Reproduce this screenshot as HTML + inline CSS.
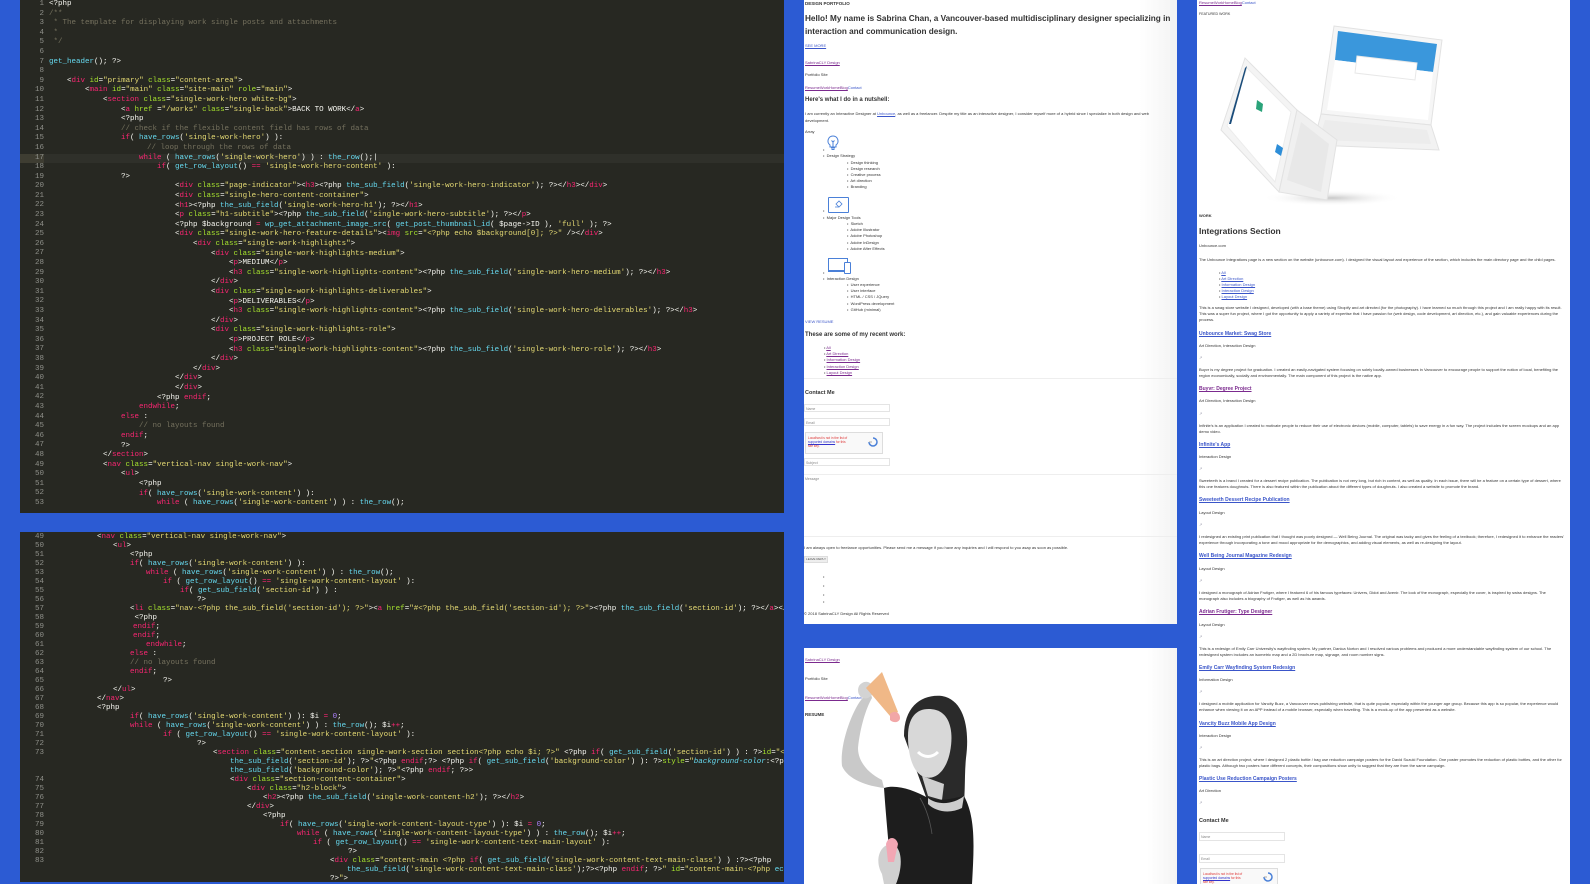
<!DOCTYPE html>
<html><head><meta charset="utf-8"><style>
*{margin:0;padding:0;box-sizing:border-box}
body{width:1590px;height:884px;background:#2c5bd3;position:relative;overflow:hidden;font-family:"Liberation Sans",sans-serif}
.code{position:absolute;background:#272822;overflow:hidden;font-family:"Liberation Mono",monospace;font-size:7.5px;color:#f8f8f2;white-space:pre}
.ln{position:absolute;left:0;width:24px;text-align:right;color:#8f908a}
.l{position:absolute;}
.k{color:#f92672}.a{color:#a6e22e}.s{color:#e6db74}.f{color:#66d9ef}.c{color:#75715e}.n{color:#ae81ff}
.pg{position:absolute;background:#fff;overflow:hidden}
.t{position:absolute;font-size:4px;line-height:6px;color:#333;white-space:nowrap}
.w{white-space:normal}
.lk{color:#3a55c9;text-decoration:underline}
.pu{color:#7b2a8e;text-decoration:underline}
.b{font-weight:bold}
.h{position:absolute;font-weight:bold;color:#333;white-space:nowrap}
.inp{position:absolute;border:1px solid #e4e4e4;background:#fff;font-size:3.5px;color:#888;padding:2px 1px}
.cap{position:absolute;border:1px solid #ddd;background:#f9f9f9;font-size:3.2px;color:#d33;line-height:4px;padding:3px 2px}
.bp .l{margin-top:1px}
</style></head><body>

<!-- TOP CODE PANEL -->
<div class="code" style="left:20px;top:0;width:764px;height:513px">
<div style="position:absolute;left:0;top:153.6px;width:24px;height:9.6px;background:#3e3d32"></div>
<div style="position:absolute;left:24px;top:153.6px;width:740px;height:9.6px;background:#2f302a"></div>
<div class="ln" style="top:0;line-height:9.6px;white-space:pre">1
2
3
4
5
6
7
8
9
10
11
12
13
14
15
16
17
18
19
20
21
22
23
24
25
26
27
28
29
30
31
32
33
34
35
36
37
38
39
40
41
42
43
44
45
46
47
48
49
50
51
52
53</div>
<div class="l" style="left:29px;top:0px">&lt;?php</div>
<div class="l c" style="left:29px;top:9.6px">/**</div>
<div class="l c" style="left:29px;top:19.2px"> * The template for displaying work single posts and attachments</div>
<div class="l c" style="left:29px;top:28.8px"> *</div>
<div class="l c" style="left:29px;top:38.4px"> */</div>
<div class="l" style="left:29px;top:57.6px"><span class="f">get_header</span>(); ?&gt;</div>
<div class="l" style="left:47px;top:76.8px">&lt;<span class="k">div</span> <span class="a">id</span>=<span class="s">"primary"</span> <span class="a">class</span>=<span class="s">"content-area"</span>&gt;</div>
<div class="l" style="left:65px;top:86.4px">&lt;<span class="k">main</span> <span class="a">id</span>=<span class="s">"main"</span> <span class="a">class</span>=<span class="s">"site-main"</span> <span class="a">role</span>=<span class="s">"main"</span>&gt;</div>
<div class="l" style="left:83px;top:96px">&lt;<span class="k">section</span> <span class="a">class</span>=<span class="s">"single-work-hero white-bg"</span>&gt;</div>
<div class="l" style="left:101px;top:105.6px">&lt;<span class="k">a</span> <span class="a">href</span> =<span class="s">"/works"</span> <span class="a">class</span>=<span class="s">"single-back"</span>&gt;BACK TO WORK&lt;/<span class="k">a</span>&gt;</div>
<div class="l" style="left:101px;top:115.2px">&lt;?php</div>
<div class="l c" style="left:101px;top:124.8px">// check if the flexible content field has rows of data</div>
<div class="l" style="left:101px;top:134.4px"><span class="k">if</span>( <span class="f">have_rows</span>(<span class="s">'single-work-hero'</span>) ):</div>
<div class="l c" style="left:127px;top:144px">// loop through the rows of data</div>
<div class="l" style="left:119px;top:153.6px"><span class="k">while</span> ( <span class="f">have_rows</span>(<span class="s">'single-work-hero'</span>) ) : <span class="f">the_row</span>();|</div>
<div class="l" style="left:137px;top:163.2px"><span class="k">if</span>( <span class="f">get_row_layout</span>() <span class="k">==</span> <span class="s">'single-work-hero-content'</span> ):</div>
<div class="l" style="left:101px;top:172.8px">?&gt;</div>
<div class="l" style="left:155px;top:182.4px">&lt;<span class="k">div</span> <span class="a">class</span>=<span class="s">"page-indicator"</span>&gt;&lt;<span class="k">h3</span>&gt;&lt;?php <span class="f">the_sub_field</span>(<span class="s">'single-work-hero-indicator'</span>); ?&gt;&lt;/<span class="k">h3</span>&gt;&lt;/<span class="k">div</span>&gt;</div>
<div class="l" style="left:155px;top:192px">&lt;<span class="k">div</span> <span class="a">class</span>=<span class="s">"single-hero-content-container"</span>&gt;</div>
<div class="l" style="left:155px;top:201.6px">&lt;<span class="k">h1</span>&gt;&lt;?php <span class="f">the_sub_field</span>(<span class="s">'single-work-hero-h1'</span>); ?&gt;&lt;/<span class="k">h1</span>&gt;</div>
<div class="l" style="left:155px;top:211.2px">&lt;<span class="k">p</span> <span class="a">class</span>=<span class="s">"h1-subtitle"</span>&gt;&lt;?php <span class="f">the_sub_field</span>(<span class="s">'single-work-hero-subtitle'</span>); ?&gt;&lt;/<span class="k">p</span>&gt;</div>
<div class="l" style="left:155px;top:220.8px">&lt;?php $background <span class="k">=</span> <span class="f">wp_get_attachment_image_src</span>( <span class="f">get_post_thumbnail_id</span>( $page-&gt;ID ), <span class="s">'full'</span> ); ?&gt;</div>
<div class="l" style="left:155px;top:230.4px">&lt;<span class="k">div</span> <span class="a">class</span>=<span class="s">"single-work-hero-feature-details"</span>&gt;&lt;<span class="k">img</span> <span class="a">src</span>=<span class="s">"&lt;?php echo $background[0]; ?&gt;"</span> /&gt;&lt;/<span class="k">div</span>&gt;</div>
<div class="l" style="left:173px;top:240px">&lt;<span class="k">div</span> <span class="a">class</span>=<span class="s">"single-work-highlights"</span>&gt;</div>
<div class="l" style="left:191px;top:249.6px">&lt;<span class="k">div</span> <span class="a">class</span>=<span class="s">"single-work-highlights-medium"</span>&gt;</div>
<div class="l" style="left:209px;top:259.2px">&lt;<span class="k">p</span>&gt;MEDIUM&lt;/<span class="k">p</span>&gt;</div>
<div class="l" style="left:209px;top:268.8px">&lt;<span class="k">h3</span> <span class="a">class</span>=<span class="s">"single-work-highlights-content"</span>&gt;&lt;?php <span class="f">the_sub_field</span>(<span class="s">'single-work-hero-medium'</span>); ?&gt;&lt;/<span class="k">h3</span>&gt;</div>
<div class="l" style="left:191px;top:278.4px">&lt;/<span class="k">div</span>&gt;</div>
<div class="l" style="left:191px;top:288px">&lt;<span class="k">div</span> <span class="a">class</span>=<span class="s">"single-work-highlights-deliverables"</span>&gt;</div>
<div class="l" style="left:209px;top:297.6px">&lt;<span class="k">p</span>&gt;DELIVERABLES&lt;/<span class="k">p</span>&gt;</div>
<div class="l" style="left:209px;top:307.2px">&lt;<span class="k">h3</span> <span class="a">class</span>=<span class="s">"single-work-highlights-content"</span>&gt;&lt;?php <span class="f">the_sub_field</span>(<span class="s">'single-work-hero-deliverables'</span>); ?&gt;&lt;/<span class="k">h3</span>&gt;</div>
<div class="l" style="left:191px;top:316.8px">&lt;/<span class="k">div</span>&gt;</div>
<div class="l" style="left:191px;top:326.4px">&lt;<span class="k">div</span> <span class="a">class</span>=<span class="s">"single-work-highlights-role"</span>&gt;</div>
<div class="l" style="left:209px;top:336px">&lt;<span class="k">p</span>&gt;PROJECT ROLE&lt;/<span class="k">p</span>&gt;</div>
<div class="l" style="left:209px;top:345.6px">&lt;<span class="k">h3</span> <span class="a">class</span>=<span class="s">"single-work-highlights-content"</span>&gt;&lt;?php <span class="f">the_sub_field</span>(<span class="s">'single-work-hero-role'</span>); ?&gt;&lt;/<span class="k">h3</span>&gt;</div>
<div class="l" style="left:191px;top:355.2px">&lt;/<span class="k">div</span>&gt;</div>
<div class="l" style="left:173px;top:364.8px">&lt;/<span class="k">div</span>&gt;</div>
<div class="l" style="left:155px;top:374.4px">&lt;/<span class="k">div</span>&gt;</div>
<div class="l" style="left:155px;top:384px">&lt;/<span class="k">div</span>&gt;</div>
<div class="l" style="left:137px;top:393.6px">&lt;?php <span class="k">endif</span>;</div>
<div class="l" style="left:119px;top:403.2px"><span class="k">endwhile</span>;</div>
<div class="l" style="left:101px;top:412.8px"><span class="k">else</span> :</div>
<div class="l c" style="left:119px;top:422.4px">// no layouts found</div>
<div class="l" style="left:101px;top:432px"><span class="k">endif</span>;</div>
<div class="l" style="left:101px;top:441.6px">?&gt;</div>
<div class="l" style="left:83px;top:451.2px">&lt;/<span class="k">section</span>&gt;</div>
<div class="l" style="left:83px;top:460.8px">&lt;<span class="k">nav</span> <span class="a">class</span>=<span class="s">"vertical-nav single-work-nav"</span>&gt;</div>
<div class="l" style="left:101px;top:470.4px">&lt;<span class="k">ul</span>&gt;</div>
<div class="l" style="left:119px;top:480px">&lt;?php</div>
<div class="l" style="left:119px;top:489.6px"><span class="k">if</span>( <span class="f">have_rows</span>(<span class="s">'single-work-content'</span>) ):</div>
<div class="l" style="left:137px;top:499.2px"><span class="k">while</span> ( <span class="f">have_rows</span>(<span class="s">'single-work-content'</span>) ) : <span class="f">the_row</span>();</div>
</div>

<!-- BOTTOM CODE PANEL -->
<div class="code bp" style="left:20px;top:532px;width:764px;height:350px">
<div class="ln" style="top:1px;line-height:9px">49
50
51
52
53
54
55
56
57
58
59
60
61
62
63
64
65
66
67
68
69
70
71
72
73


74
75
76
77
78
79
80
81
82
83</div>
<div class="l" style="left:77px;top:0">&lt;<span class="k">nav</span> <span class="a">class</span>=<span class="s">"vertical-nav single-work-nav"</span>&gt;</div>
<div class="l" style="left:93px;top:9px">&lt;<span class="k">ul</span>&gt;</div>
<div class="l" style="left:110px;top:18px">&lt;?php</div>
<div class="l" style="left:110px;top:27px"><span class="k">if</span>( <span class="f">have_rows</span>(<span class="s">'single-work-content'</span>) ):</div>
<div class="l" style="left:126px;top:36px"><span class="k">while</span> ( <span class="f">have_rows</span>(<span class="s">'single-work-content'</span>) ) : <span class="f">the_row</span>();</div>
<div class="l" style="left:143px;top:45px"><span class="k">if</span> ( <span class="f">get_row_layout</span>() <span class="k">==</span> <span class="s">'single-work-content-layout'</span> ):</div>
<div class="l" style="left:160px;top:54px"><span class="k">if</span>( <span class="f">get_sub_field</span>(<span class="s">'section-id'</span>) ) :</div>
<div class="l" style="left:177px;top:63px">?&gt;</div>
<div class="l" style="left:110px;top:72px">&lt;<span class="k">li</span> <span class="a">class</span>=<span class="s">"nav-&lt;?php the_sub_field('section-id'); ?&gt;"</span>&gt;&lt;<span class="k">a</span> <span class="a">href</span>=<span class="s">"#&lt;?php the_sub_field('section-id'); ?&gt;"</span>&gt;&lt;?php <span class="f">the_sub_field</span>(<span class="s">'section-id'</span>); ?&gt;&lt;/<span class="k">a</span>&gt;&lt;/<span class="k">li</span>&gt;</div>
<div class="l" style="left:110px;top:81px"> &lt;?php</div>
<div class="l" style="left:113px;top:90px"><span class="k">endif</span>;</div>
<div class="l" style="left:113px;top:99px"><span class="k">endif</span>;</div>
<div class="l" style="left:126px;top:108px"><span class="k">endwhile</span>;</div>
<div class="l" style="left:110px;top:117px"><span class="k">else</span> :</div>
<div class="l c" style="left:110px;top:126px">// no layouts found</div>
<div class="l" style="left:110px;top:135px"><span class="k">endif</span>;</div>
<div class="l" style="left:143px;top:144px">?&gt;</div>
<div class="l" style="left:93px;top:153px">&lt;/<span class="k">ul</span>&gt;</div>
<div class="l" style="left:77px;top:162px">&lt;/<span class="k">nav</span>&gt;</div>
<div class="l" style="left:77px;top:171px">&lt;?php</div>
<div class="l" style="left:110px;top:180px"><span class="k">if</span>( <span class="f">have_rows</span>(<span class="s">'single-work-content'</span>) ): $i <span class="k">=</span> <span class="n">0</span>;</div>
<div class="l" style="left:110px;top:189px"><span class="k">while</span> ( <span class="f">have_rows</span>(<span class="s">'single-work-content'</span>) ) : <span class="f">the_row</span>(); $i<span class="k">++</span>;</div>
<div class="l" style="left:143px;top:198px"><span class="k">if</span> ( <span class="f">get_row_layout</span>() <span class="k">==</span> <span class="s">'single-work-content-layout'</span> ):</div>
<div class="l" style="left:177px;top:207px">?&gt;</div>
<div class="l" style="left:193px;top:216px">&lt;<span class="k">section</span> <span class="a">class</span>=<span class="s">"content-section single-work-section section&lt;?php echo $i; ?&gt;"</span> &lt;?php <span class="k">if</span>( <span class="f">get_sub_field</span>(<span class="s">'section-id'</span>) ) : ?&gt;<span class="a">id</span>=<span class="s">"&lt;?php</span></div>
<div class="l" style="left:210px;top:225px"><span class="f">the_sub_field</span>(<span class="s">'section-id'</span>); ?&gt;<span class="s">"</span>&lt;?php <span class="k">endif</span>;?&gt; &lt;?php <span class="k">if</span>( <span class="f">get_sub_field</span>(<span class="s">'background-color'</span>) ): ?&gt;<span class="a">style</span>=<span class="s">"</span><span class="f" style="font-style:italic">background-color</span>:&lt;?php</div>
<div class="l" style="left:210px;top:234px"><span class="f">the_sub_field</span>(<span class="s">'background-color'</span>); ?&gt;<span class="s">"</span>&lt;?php <span class="k">endif</span>; ?&gt;&gt;</div>
<div class="l" style="left:210px;top:243px">&lt;<span class="k">div</span> <span class="a">class</span>=<span class="s">"section-content-container"</span>&gt;</div>
<div class="l" style="left:227px;top:252px">&lt;<span class="k">div</span> <span class="a">class</span>=<span class="s">"h2-block"</span>&gt;</div>
<div class="l" style="left:243px;top:261px">&lt;<span class="k">h2</span>&gt;&lt;?php <span class="f">the_sub_field</span>(<span class="s">'single-work-content-h2'</span>); ?&gt;&lt;/<span class="k">h2</span>&gt;</div>
<div class="l" style="left:227px;top:270px">&lt;/<span class="k">div</span>&gt;</div>
<div class="l" style="left:243px;top:279px">&lt;?php</div>
<div class="l" style="left:260px;top:288px"><span class="k">if</span>( <span class="f">have_rows</span>(<span class="s">'single-work-content-layout-type'</span>) ): $i <span class="k">=</span> <span class="n">0</span>;</div>
<div class="l" style="left:277px;top:297px"><span class="k">while</span> ( <span class="f">have_rows</span>(<span class="s">'single-work-content-layout-type'</span>) ) : <span class="f">the_row</span>(); $i<span class="k">++</span>;</div>
<div class="l" style="left:293px;top:306px"><span class="k">if</span> ( <span class="f">get_row_layout</span>() <span class="k">==</span> <span class="s">'single-work-content-text-main-layout'</span> ):</div>
<div class="l" style="left:328px;top:315px">?&gt;</div>
<div class="l" style="left:310px;top:324px">&lt;<span class="k">div</span> <span class="a">class</span>=<span class="s">"content-main &lt;?php</span> <span class="k">if</span>( <span class="f">get_sub_field</span>(<span class="s">'single-work-content-text-main-class'</span>) ) :?&gt;&lt;?php</div>
<div class="l" style="left:327px;top:333px"><span class="f">the_sub_field</span>(<span class="s">'single-work-content-text-main-class'</span>);?&gt;&lt;?php <span class="k">endif</span>; ?&gt;<span class="s">"</span> <span class="a">id</span>=<span class="s">"content-main-&lt;?php</span> <span class="f">echo</span> $i;</div>
<div class="l" style="left:310px;top:342px">?&gt;<span class="s">"</span>&gt;</div>
</div>

<!-- MIDDLE TOP PAGE -->
<div class="pg" style="left:804px;top:0;width:373px;height:624px;background:linear-gradient(90deg,#fff 90%,#f3f3f3)">
<div class="t b" style="left:1px;top:1px;font-size:4.5px">DESIGN PORTFOLIO</div>
<div class="h" style="left:1px;top:12px;font-size:8.2px;line-height:13px">Hello! My name is Sabrina Chan, a Vancouver-based multidisciplinary designer specializing in<br>interaction and communication design.</div>
<div class="t lk" style="left:1px;top:43px">SEE MORE</div>
<div class="t pu" style="left:1px;top:60px">SabrinaCLY Design</div>
<div class="t" style="left:1px;top:72px">Portfolio Site</div>
<div class="t" style="left:1px;top:85px"><span class="pu">ResumeWorkHomeBlog</span><span class="lk" style="text-decoration:none">Contact</span></div>
<div class="h" style="left:1px;top:97px;font-size:6px">Here's what I do in a nutshell:</div>
<div class="t w" style="left:1px;top:110px;width:360px;line-height:7px">I am currently an Interactive Designer at <span class="lk">Unbounce</span>, as well as a freelancer. Despite my title as an interactive designer, I consider myself more of a hybrid since I specialize in both design and web development.</div>
<div class="t" style="left:1px;top:129px">Array</div>
<svg style="position:absolute;left:22px;top:135px" width="14" height="16" viewBox="0 0 14 16"><path d="M7 1a5 5 0 0 0-3 9v2h6v-2a5 5 0 0 0-3-9zM5 13h4M5.5 14.5h3M7 12V7l-1.5-1.5M7 7l1.5-1.5" fill="none" stroke="#4a80d8" stroke-width="1"/></svg>
<div class="t" style="left:19px;top:147px">•</div>
<div class="t" style="left:19px;top:153px">•&nbsp; Design Strategy</div>
<div class="t" style="left:43px;top:160px;line-height:6.1px">•&nbsp; Design thinking<br>•&nbsp; Design research<br>•&nbsp; Creative process<br>•&nbsp; Art direction<br>•&nbsp; Branding</div>
<div style="position:absolute;left:24px;top:197px;width:21px;height:16px;border:1px solid #4a80d8;border-radius:1px"><svg width="19" height="14" viewBox="0 0 19 14"><path d="M7 6l3-3 3 3-3 3zM6 9l4 0" fill="none" stroke="#4a80d8" stroke-width=".8"/></svg></div>
<div class="t" style="left:19px;top:208px">•</div>
<div class="t" style="left:19px;top:215px">•&nbsp; Major Design Tools</div>
<div class="t" style="left:43px;top:221px;line-height:6.2px">•&nbsp; Sketch<br>•&nbsp; Adobe Illustrator<br>•&nbsp; Adobe Photoshop<br>•&nbsp; Adobe InDesign<br>•&nbsp; Adobe After Effects</div>
<div style="position:absolute;left:24px;top:258px;width:20px;height:14px;border:1px solid #4a80d8;border-bottom-width:2px"></div>
<div style="position:absolute;left:40px;top:262px;width:7px;height:12px;border:1px solid #4a80d8;background:#fff;border-radius:1px"></div>
<div class="t" style="left:19px;top:270px">•</div>
<div class="t" style="left:19px;top:276px">•&nbsp; Interaction Design</div>
<div class="t" style="left:43px;top:282px;line-height:6.2px">•&nbsp; User experience<br>•&nbsp; User interface<br>•&nbsp; HTML / CSS / JQuery<br>•&nbsp; WordPress development<br>•&nbsp; GitHub (minimal)</div>
<div class="t lk" style="left:1px;top:319px;text-decoration:none">VIEW RESUME</div>
<div class="h" style="left:1px;top:332px;font-size:6px">These are some of my recent work:</div>
<div class="t" style="left:20px;top:345px;line-height:6.2px">• <span class="pu">All</span><br>• <span class="pu">Art Direction</span><br>• <span class="pu">Information Design</span><br>• <span class="pu">Interaction Design</span><br>• <span class="pu">Layout Design</span></div>
<div style="position:absolute;left:0;top:378px;width:373px;height:1px;background:#eee"></div>
<div class="h" style="left:1px;top:390px;font-size:5.5px">Contact Me</div>
<div class="inp" style="left:0;top:404px;width:86px;height:8px">Name</div>
<div class="inp" style="left:0;top:418px;width:86px;height:8px">Email</div>
<div class="cap" style="left:1px;top:432px;width:78px;height:22px">Localhost is not in the list of<br><span style="color:#33c;text-decoration:underline">supported domains</span> for this<br>site key.<svg style="position:absolute;right:4px;top:4px" width="10" height="10" viewBox="0 0 10 10"><path d="M5 1a4 4 0 1 1-4 4" fill="none" stroke="#4a80d8" stroke-width="1.5"/><path d="M1 5h3" stroke="#aaa"/></svg></div>
<div class="inp" style="left:0;top:458px;width:86px;height:8px">Subject</div>
<div style="position:absolute;left:0;top:474px;width:373px;height:63px;border-top:1px solid #eee;border-bottom:1px solid #eee;font-size:3.5px;color:#888;padding:2px 1px">Message</div>
<div class="t" style="left:0;top:545px">I am always open to freelance opportunities. Please send me a message if you have any inquiries and I will respond to you asap as soon as possible.</div>
<div style="position:absolute;left:0;top:556px;width:24px;height:7px;background:#eee;border:1px solid #ddd;font-size:3px;color:#555;text-align:center;line-height:5px">LEAVE REPLY</div>
<div class="t" style="left:19px;top:574px">•</div>
<div class="t" style="left:19px;top:583px">•</div>
<div class="t" style="left:19px;top:592px">•</div>
<div class="t" style="left:19px;top:599px">•</div>
<div class="t" style="left:0;top:611px">© 2018 SabrinaCLY Design All Rights Reserved</div>
</div>

<!-- MIDDLE BOTTOM PAGE -->
<div class="pg" style="left:804px;top:648px;width:373px;height:236px;background:linear-gradient(90deg,#fff 92%,#f4f4f4)">
<div class="t pu" style="left:1px;top:9px">SabrinaCLY Design</div>
<div class="t" style="left:1px;top:28px">Portfolio Site</div>
<div class="t" style="left:1px;top:47px"><span class="pu">ResumeWorkHomeBlog</span><span class="lk" style="text-decoration:none">Contact</span></div>
<div class="t b" style="left:1px;top:64px;font-size:4.5px">RESUME</div>
<svg style="position:absolute;left:0;top:0" width="373" height="236" viewBox="0 0 373 236">
<path d="M38 118 C36 100 44 75 52 60 C56 52 62 46 66 42 L68 50 C62 60 56 80 54 100 C54 112 62 124 78 132 L80 140 C64 138 44 132 38 118Z" fill="#c9c9c9"/>
<path d="M55 38 c4 -6 12 -6 14 2 c2 6 -4 12 -10 10 c-5 -2 -6 -8 -4 -12z" fill="#d3d3d3"/>
<path d="M62 40 L78 24 L94 64 L86 68Z" fill="#f0b887"/>
<path d="M86 66 c4 -4 10 -2 10 4 c0 4 -6 6 -10 2z" fill="#f2a7a7"/>
<path d="M100 88 C100 58 118 46 138 48 C160 52 166 80 162 110 C160 130 162 150 158 166 C150 176 134 174 126 160 Z" fill="#2a2a2a"/>
<path d="M104 88 C104 66 116 58 132 62 C146 66 150 84 146 104 C142 124 130 134 118 128 C108 122 104 106 104 88Z" fill="#d8d8d8"/>
<path d="M114 104 c6 6 14 6 20 0" stroke="#fff" stroke-width="3" fill="none"/>
<path d="M118 128 L124 148 L138 152 L140 136Z" fill="#cfcfcf"/>
<path d="M80 140 C92 136 110 142 124 150 C138 154 150 150 160 148 C172 170 170 200 168 236 L88 236 C86 210 82 170 80 140Z" fill="#1d1d1d"/>
<path d="M124 150 C134 158 150 156 160 148 L158 160 C146 166 132 164 124 156Z" fill="#cdcdcd"/>
<path d="M116 150 c6 10 10 22 12 36" stroke="#555" stroke-width=".8" fill="none"/>
<path d="M78 226 C70 212 76 196 88 196 C100 200 98 222 92 236 L80 236Z" fill="#d0d0d0"/>
<path d="M82 196 c2 -8 10 -8 12 0 l-4 18 l-6 0z" fill="#f2a7b4"/>
</svg>
</div>

<!-- RIGHT PAGE -->
<div class="pg" style="left:1197px;top:0;width:373px;height:884px">
<div class="t" style="left:2px;top:0px"><span class="pu">ResumeWorkHomeBlog</span><span class="lk" style="text-decoration:none">Contact</span></div>
<div class="t" style="left:2px;top:11px;font-size:3.6px">FEATURED WORK</div>
<svg style="position:absolute;left:20px;top:20px" width="260" height="190" viewBox="0 0 260 190">
<defs><radialGradient id="sh" cx="50%" cy="50%" r="50%"><stop offset="0" stop-color="#c8c8c8"/><stop offset="1" stop-color="#fff" stop-opacity="0"/></radialGradient></defs>
<ellipse cx="115" cy="178" rx="70" ry="8" fill="url(#sh)"/>
<path d="M117 6 L225 20 L214 105 L104 94Z" fill="#f6f6f6" stroke="#e2e2e2"/>
<path d="M121 11 L220 24 L216 52 L118 40Z" fill="#3a97dc"/>
<path d="M118 40 L216 52 L211 100 L110 90Z" fill="#fff"/>
<path d="M140 36 L200 43 L198 60 L138 53Z" fill="#fff" stroke="#e8e8e8"/>
<path d="M104 94 L214 105 L222 130 L96 125Z" fill="#f2f2f2" stroke="#e2e2e2"/>
<path d="M108 100 L210 110 L214 124 L102 120Z" fill="#ececec"/>
<path d="M4 110 L28 38 L80 90 L62 172Z" fill="#f4f4f4" stroke="#e2e2e2"/>
<path d="M10 106 L30 48 L74 92 L58 162Z" fill="#fff" stroke="#ececec"/>
<path d="M28 48 L30 46 L14 104 L12 104Z" fill="#1a4c7a"/>
<path d="M40 80 L46 84 L45 92 L39 89Z" fill="#2aa37a"/>
<path d="M60 124 L66 128 L64 136 L58 132Z" fill="#2e8ed8"/>
<path d="M62 172 L80 90 L120 120 L110 180Z" fill="#f0f0f0" stroke="#e2e2e2"/>
<path d="M70 160 L84 102 L112 124 L104 172Z" fill="#e8e8e8"/>
</svg>
<div class="t b" style="left:2px;top:213px">WORK</div>
<div class="h" style="left:2px;top:226px;font-size:8.5px">Integrations Section</div>
<div class="t" style="left:2px;top:243px">Unbounce.com</div>
<div class="t" style="left:2px;top:257px">The Unbounce Integrations page is a new section on the website (unbounce.com). I designed the visual layout and experience of the section, which includes the main directory page and the child pages.</div>
<div class="t" style="left:22px;top:270px;line-height:6.1px">• <span class="lk">All</span><br>• <span class="lk">Art Direction</span><br>• <span class="lk">Information Design</span><br>• <span class="lk">Interaction Design</span><br>• <span class="lk">Layout Design</span></div>
<div class="t w" style="left:2px;top:305px;width:366px">This is a swag store website I designed, developed (with a base theme) using Shopify and art directed (for the photography). I have learned so much through this project and I am really happy with its result. This was a super fun project, where I got the opportunity to apply a variety of expertise that I have passion for (web design, code development, art direction, etc.), and gain valuable experiences during the process.</div>
<div class="t b lk" style="left:2px;top:331px;font-size:5px">Unbounce Market: Swag Store</div>
<div class="t" style="left:2px;top:343px">Art Direction, Interaction Design</div>
<div class="t" style="left:2px;top:355px;color:#99a">↗</div>
<div class="t w" style="left:2px;top:367px;width:366px">Buyvr is my degree project for graduation. I created an easily-navigated system focusing on solely locally-owned businesses in Vancouver to encourage people to support the notion of local, benefiting the region economically, socially and environmentally. The main component of this project is the native app.</div>
<div class="t b pu" style="left:2px;top:386px;font-size:5px">Buyvr: Degree Project</div>
<div class="t" style="left:2px;top:398px">Art Direction, Interaction Design</div>
<div class="t" style="left:2px;top:411px;color:#99a">↗</div>
<div class="t w" style="left:2px;top:423px;width:366px">Infinite's is an application I created to motivate people to reduce their use of electronic devices (mobile, computer, tablets) to save energy in a fun way. The project includes the screen mockups and an app demo video.</div>
<div class="t b lk" style="left:2px;top:442px;font-size:5px">Infinite's App</div>
<div class="t" style="left:2px;top:454px">Interaction Design</div>
<div class="t" style="left:2px;top:466px;color:#99a">↗</div>
<div class="t w" style="left:2px;top:478px;width:366px">Sweeteeth is a brand I created for a dessert recipe publication. The publication is not very long, but rich in content, as well as quality. In each issue, there will be a feature on a certain type of dessert, where this one features doughnuts. There is also featured within the publication about the different types of doughnuts. I also created a website to promote the brand.</div>
<div class="t b lk" style="left:2px;top:497px;font-size:5px">Sweeteeth Dessert Recipe Publication</div>
<div class="t" style="left:2px;top:510px">Layout Design</div>
<div class="t" style="left:2px;top:522px;color:#99a">↗</div>
<div class="t w" style="left:2px;top:534px;width:366px">I redesigned an existing print publication that I thought was poorly designed — Well Being Journal. The original was tacky and gives the feeling of a textbook; therefore, I redesigned it to enhance the readers' experience through incorporating a tone and mood appropriate for the demographics, and adding visual elements, as well as re-designing the layout.</div>
<div class="t b lk" style="left:2px;top:553px;font-size:5px">Well Being Journal Magazine Redesign</div>
<div class="t" style="left:2px;top:566px">Layout Design</div>
<div class="t" style="left:2px;top:578px;color:#99a">↗</div>
<div class="t w" style="left:2px;top:590px;width:366px">I designed a monograph of Adrian Frutiger, where I featured 6 of his famous typefaces: Univers, Didot and Avenir. The look of the monograph, especially the cover, is inspired by swiss designs. The monograph also includes a biography of Frutiger, as well as his awards.</div>
<div class="t b pu" style="left:2px;top:609px;font-size:5px">Adrian Frutiger: Type Designer</div>
<div class="t" style="left:2px;top:622px">Layout Design</div>
<div class="t" style="left:2px;top:634px;color:#99a">↗</div>
<div class="t w" style="left:2px;top:646px;width:366px">This is a redesign of Emily Carr University's wayfinding system. My partner, Danica Norton and I resolved various problems and produced a more understandable wayfinding system of our school. The redesigned system includes an isometric map and a 2D brochure map, signage, and room number signs.</div>
<div class="t b lk" style="left:2px;top:665px;font-size:5px">Emily Carr Wayfinding System Redesign</div>
<div class="t" style="left:2px;top:677px">Information Design</div>
<div class="t" style="left:2px;top:689px;color:#99a">↗</div>
<div class="t w" style="left:2px;top:701px;width:366px">I designed a mobile application for Vancity Buzz, a Vancouver news publishing website, that is quite popular, especially within the younger age group. Because this app is so popular, the experience would enhance when viewing it on an APP instead of a mobile browser, especially when travelling. This is a mock-up of the app presented as a website.</div>
<div class="t b lk" style="left:2px;top:721px;font-size:5px">Vancity Buzz Mobile App Design</div>
<div class="t" style="left:2px;top:733px">Interaction Design</div>
<div class="t" style="left:2px;top:745px;color:#99a">↗</div>
<div class="t w" style="left:2px;top:757px;width:366px">This is an art direction project, where I designed 2 plastic bottle / bag use reduction campaign posters for the David Suzuki Foundation. One poster promotes the reduction of plastic bottles, and the other for plastic bags. Although two posters have different concepts, their compositions show unity to suggest that they are from the same campaign.</div>
<div class="t b lk" style="left:2px;top:776px;font-size:5px">Plastic Use Reduction Campaign Posters</div>
<div class="t" style="left:2px;top:788px">Art Direction</div>
<div class="t" style="left:2px;top:800px;color:#99a">↗</div>
<div class="h" style="left:2px;top:818px;font-size:5.5px">Contact Me</div>
<div class="inp" style="left:2px;top:832px;width:86px;height:9px">Name</div>
<div class="inp" style="left:2px;top:854px;width:86px;height:9px">Email</div>
<div class="cap" style="left:3px;top:868px;width:78px;height:20px">Localhost is not in the list of<br><span style="color:#33c;text-decoration:underline">supported domains</span> for this<br>site key.<svg style="position:absolute;right:4px;top:3px" width="10" height="10" viewBox="0 0 10 10"><path d="M5 1a4 4 0 1 1-4 4" fill="none" stroke="#4a80d8" stroke-width="1.5"/><path d="M1 5h3" stroke="#aaa"/></svg></div>
</div>

</body></html>
